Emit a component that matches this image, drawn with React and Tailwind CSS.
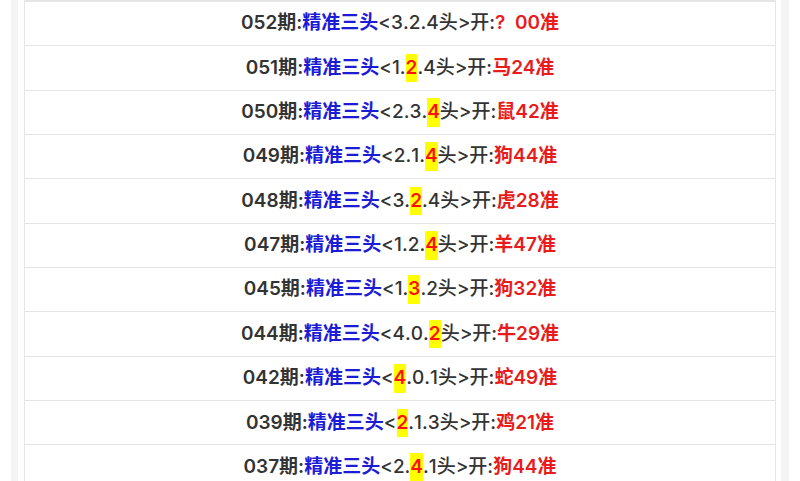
import React from 'react';

const rows = [
  { no: '052', nums: ['3', '2', '4'], hit: -1, ans: '?  00' },
  { no: '051', nums: ['1', '2', '4'], hit: 1, ans: '马24' },
  { no: '050', nums: ['2', '3', '4'], hit: 2, ans: '鼠42' },
  { no: '049', nums: ['2', '1', '4'], hit: 2, ans: '狗44' },
  { no: '048', nums: ['3', '2', '4'], hit: 1, ans: '虎28' },
  { no: '047', nums: ['1', '2', '4'], hit: 2, ans: '羊47' },
  { no: '045', nums: ['1', '3', '2'], hit: 1, ans: '狗32' },
  { no: '044', nums: ['4', '0', '2'], hit: 2, ans: '牛29' },
  { no: '042', nums: ['4', '0', '1'], hit: 0, ans: '蛇49' },
  { no: '039', nums: ['2', '1', '3'], hit: 0, ans: '鸡21' },
  { no: '037', nums: ['2', '4', '1'], hit: 1, ans: '狗44' },
];

function Row({ row }) {
  return (
    <div className="h-[44.35px] shrink-0 border-b border-[#e4e4e4] flex items-center justify-center text-[19px] font-semibold text-[#333] whitespace-pre">
      <span>{row.no}期:</span>
      <span className="text-[#1c1cd6]">精准三头</span>
      <span className="font-medium">&lt;</span>
      {row.nums.map((n, i) => (
        <React.Fragment key={i}>
          {i === row.hit ? (
            <span className="bg-[#ffff00] text-[#ff1010] font-semibold">{n}</span>
          ) : (
            <span className="font-medium">{n}</span>
          )}
          {i < 2 && <span className="font-medium">.</span>}
        </React.Fragment>
      ))}
      <span className="font-medium">头&gt;开:</span>
      <span className="text-[#e81c1c] font-semibold">{row.ans}准</span>
    </div>
  );
}

export default function App() {
  return (
    <div
      className="w-[800px] h-[481px] overflow-hidden bg-white pl-[11px] pr-[11px]"
      style={{ fontFamily: 'Inter, "Noto Sans CJK SC", sans-serif' }}
    >
      <div className="h-full border-l-[7px] border-r-[8px] border-[#f4f4f4] pl-[6px] pr-[5px]">
        <div className="h-full border-x border-t-2 border-[#e6e6e6] flex flex-col">
          {rows.map((r) => (
            <Row key={r.no} row={r} />
          ))}
        </div>
      </div>
    </div>
  );
}
